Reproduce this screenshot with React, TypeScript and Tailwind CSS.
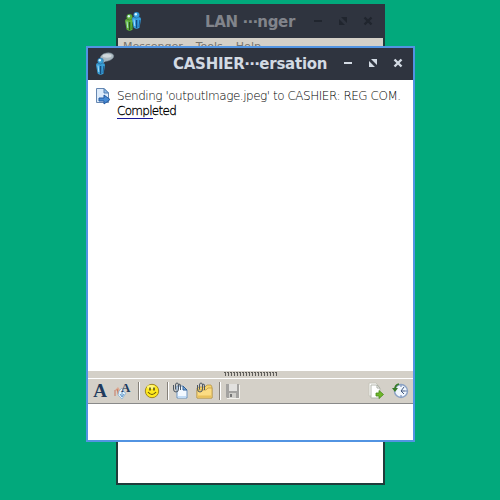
import type { ReactNode } from "react";

function Person({ x, y, color, dark }: { x: number; y: number; color: string; dark: string }) {
  return (
    <g transform={`translate(${x} ${y})`}>
      <path d="M0 7 Q0 5 2 5 L4 6.2 L6.5 5 Q9 5 9 7 L7.6 15.5 Q4.5 18 1.6 15.5 Z" fill={color} />
      <path d="M4.6 8 V16" stroke={dark} strokeWidth="1.4" />
      <path d="M7.8 8 L7 15" stroke={dark} strokeWidth=".8" />
      <path d="M2 7.5 L2.8 14" stroke="#c5edff" strokeWidth=".8" />
      <circle cx="4.5" cy="3" r="3" fill={color} stroke={dark} strokeWidth=".3" />
      <circle cx="3.8" cy="2.2" r="1.2" fill="#d8f5ff" />
    </g>
  );
}

function WindowControls({ color }: { color: string }) {
  return (
    <svg width="64" height="16" viewBox="0 0 64 16" fill="none" className="shrink-0">
      <path d="M4 7H12" stroke={color} strokeWidth="2" />
      <path d="M31 3H37V9Z M29 5V11H35Z" fill={color} />
      <path d="M54.5 3.5L61.5 10.5M61.5 3.5L54.5 10.5" stroke={color} strokeWidth="2.4" />
    </svg>
  );
}

function Separator() {
  return <div className="h-[18px] w-[2px] shrink-0 border-l border-r border-l-[#858079] border-r-white" />;
}

function Icon({ children, className = "" }: { children: ReactNode; className?: string }) {
  return (
    <svg width="18" height="18" viewBox="0 0 18 18" fill="none" className={`shrink-0 ${className}`}>
      {children}
    </svg>
  );
}

function Clip() {
  return <path d="M1.5 3V7Q1.5 10 4 10Q6.5 10 6.5 7V3Q6.5 1 5 1Q3.5 1 3.5 3V7.5M6.5 2.5Q8.5 1 8.5 4V8" stroke="#4d5864" strokeWidth="1" />;
}

function Toolbar() {
  return (
    <div className="flex h-[26px] items-center border-t border-b border-t-white border-b-[#898989] bg-[#d4d0c8]">
      <div className="ml-[3px] w-[18px] text-center font-['Liberation_Serif',serif] text-[19px] leading-[22px] font-bold text-[#203a5c]">A</div>
      <div className="relative ml-[5px] h-[18px] w-[18px]">
        <span className="absolute top-0 left-[7px] font-['Liberation_Serif',serif] text-[13px] leading-[12px] font-bold text-[#203a5c]">A</span>
        <Icon>
          <path d="M1 8L4 5L6 8V14L3 12V9Z" fill="#dba890" />
          <path d="M1 8V14M3 7L5 13" stroke="#c87962" />
          <path d="M5 9L8 6L10 10L12 11L8 17L4 13Z" fill="#e4f2fc" stroke="#7facd0" strokeWidth=".7" />
          <path d="M8 10V14M6 12L8 15L10 12" stroke="#639acb" />
        </Icon>
      </div>
      <div className="ml-[6px]"><Separator /></div>
      <Icon className="ml-[2px]">
        <circle cx="10" cy="9" r="6.7" fill="#ffe91d" stroke="#a08621" />
        <ellipse cx="9" cy="5" rx="4" ry="2" fill="#fff779" />
        <path d="M8 5.5V8.5M12 5.5V8.5" stroke="#443d12" strokeWidth="1.4" />
        <path d="M6 10Q10 15 14 10" stroke="#65540f" strokeWidth="1.2" />
      </Icon>
      <div className="ml-[7px]"><Separator /></div>
      <Icon className="ml-[3px]">
        <path d="M5 4H11L15 8V16H5Z" fill="#f2f8ff" stroke="#6a93c0" />
        <path d="M11 4V8H15Z" fill="#79acdf" stroke="#315f95" />
        <path d="M6 15H14" stroke="#c1dbf5" strokeWidth="2" />
        <Clip />
      </Icon>
      <Icon className="ml-[6px]">
        <path d="M1 6L3 5H9L11 3H15L16 5V16H1Z" fill="#f7d56c" stroke="#b7964a" strokeWidth=".8" />
        <path d="M1 8H10L12 6H16V16H1Z" fill="#fbdc83" stroke="#b89543" strokeWidth=".7" />
        <path d="M2 14.5H15" stroke="#e9c15b" strokeWidth="2" />
        <Clip />
      </Icon>
      <div className="ml-[5px]"><Separator /></div>
      <Icon className="ml-[3px]">
        <path d="M2 2H15V16H3L2 15Z" fill="#a3a2a0" />
        <path d="M5 2H13V9H5Z" fill="#e2e1df" />
        <path d="M5 11H12V16H5Z" fill="#d0cfcb" />
        <path d="M6 12H8V15H6Z" fill="#777777" />
        <path d="M15.5 3V16.5H3" stroke="#f4f2ed" />
      </Icon>
      <div className="flex-1" />
      <Icon>
        <path d="M2 1H9L12 4V14H2Z" fill="white" stroke="#c6c5ba" />
        <path d="M4 3H10L13 6V16H4Z" fill="white" stroke="#b4b7ad" />
        <path d="M10 3V6H13" stroke="#a6aaa0" />
        <path d="M9 11H12V8.5L16.5 12.5L12 16.5V14H9Z" fill="#70b72a" stroke="#468a1a" strokeWidth=".8" />
      </Icon>
      <Icon className="mr-[4px] ml-[6px]">
        <circle cx="10" cy="9" r="6.5" fill="#f0f6fd" stroke="#8aa1c4" strokeWidth="1.4" />
        <path d="M13 5L10 9H14M10 9L13 12" stroke="#43597e" />
        <path d="M10 3V5M10 13V15M14 9H16" stroke="#6882ad" />
        <path d="M8 2Q4 3 4 7" stroke="#377b29" strokeWidth="1.8" />
        <path d="M1 6H7L4 10Z" fill="#377b29" />
      </Icon>
    </div>
  );
}

export default function App() {
  return (
    <main className="relative h-[500px] w-[500px] overflow-hidden bg-[#02a97c] font-['DejaVu_Sans',sans-serif]">
      <section className="absolute top-[4px] left-[116px] flex h-[481px] w-[269px] flex-col border-2 border-[#203c3b] border-t-[#2f343f] bg-white">
        <header className="-mx-[2px] flex h-[32px] shrink-0 items-center bg-[#2f343f] pr-[11px] pl-[8px]">
          <svg width="20" height="24" viewBox="0 0 20 24" className="shrink-0">
            <Person x={1} y={4} color="#61b33b" dark="#285b24" />
            <Person x={8} y={2} color="#36a2e2" dark="#174a83" />
          </svg>
          <h2 className="ml-[61px] text-[15px] leading-[22px] font-bold tracking-[-0.32px] whitespace-nowrap text-[#81848b]">LAN ⋯nger</h2>
          <div className="ml-auto"><WindowControls color="#20252e" /></div>
        </header>
        <nav className="flex h-[20px] shrink-0 gap-[13px] bg-[#d4d0c8] pt-[2px] pl-[5px] text-[11px] leading-[14px] text-[#77746f]">
          <span>Messenger</span><span>Tools</span><span>Help</span>
        </nav>
      </section>

      <section className="absolute top-[46px] left-[86px] flex h-[396px] w-[329px] flex-col border-2 border-[#5294e2] bg-white">
        <header className="flex h-[32px] shrink-0 items-center bg-[#2f343f] pr-[9px] pl-[7px]">
          <svg width="20" height="24" viewBox="0 0 20 24" className="shrink-0">
            <ellipse cx="12" cy="5" rx="6.8" ry="4" fill="#aab8c0" stroke="#7d8b95" strokeWidth=".5" transform="rotate(-12 12 5)" />
            <path d="M7 6L7 12L12 8Z" fill="#a3b4be" />
            <ellipse cx="12" cy="3.8" rx="4.5" ry="1.9" fill="#d0d8dc" />
            <Person x={1} y={6} color="#399ed6" dark="#174b7d" />
          </svg>
          <h1 className="ml-[58px] text-[15px] leading-[22px] font-bold tracking-[-0.25px] whitespace-nowrap text-[#d3dae3]">CASHIER⋯ersation</h1>
          <div className="ml-auto"><WindowControls color="#d3dae3" /></div>
        </header>
        <div className="flex h-[291px] shrink-0 pt-[8px] pl-[7px]">
          <svg width="17" height="17" viewBox="0 0 17 17" className="shrink-0">
            <path d="M1.5 .5H9L13.5 5V14.5H1.5Z" fill="#dcebfb" stroke="#6687b1" />
            <path d="M9 .5V5H13.5Z" fill="#8dbced" stroke="#547fae" />
            <path d="M4 10H9V7L15 11.5L9 16V13H4Z" fill="#478bd4" stroke="#245ba1" />
          </svg>
          <div className="ml-[5px] pt-px text-[12px] leading-[15px] font-extralight whitespace-nowrap">
            <p className="tracking-[-0.47px] text-black">Sending 'outputImage.jpeg' to CASHIER: REG COM.</p>
            <p className="relative tracking-[-0.7px] text-black [-webkit-text-stroke:0.3px_black]">Completed<span className="absolute bottom-0 left-0 h-px w-[36px] bg-[#171798]" /></p>
          </div>
        </div>
        <div className="flex h-[7px] shrink-0 justify-center bg-[#d4d0c8] pt-px">
          <svg width="54" height="5" viewBox="0 0 54 5">
            {Array.from({ length: 18 }, (_, i) => (
              <path key={i} d={`M${i * 3} .5H${i * 3 + 2}M${i * 3 + 1.5} 0V4`} stroke="#5f5d59" />
            ))}
          </svg>
        </div>
        <Toolbar />
        <div className="flex-1 bg-white" />
      </section>
    </main>
  );
}
